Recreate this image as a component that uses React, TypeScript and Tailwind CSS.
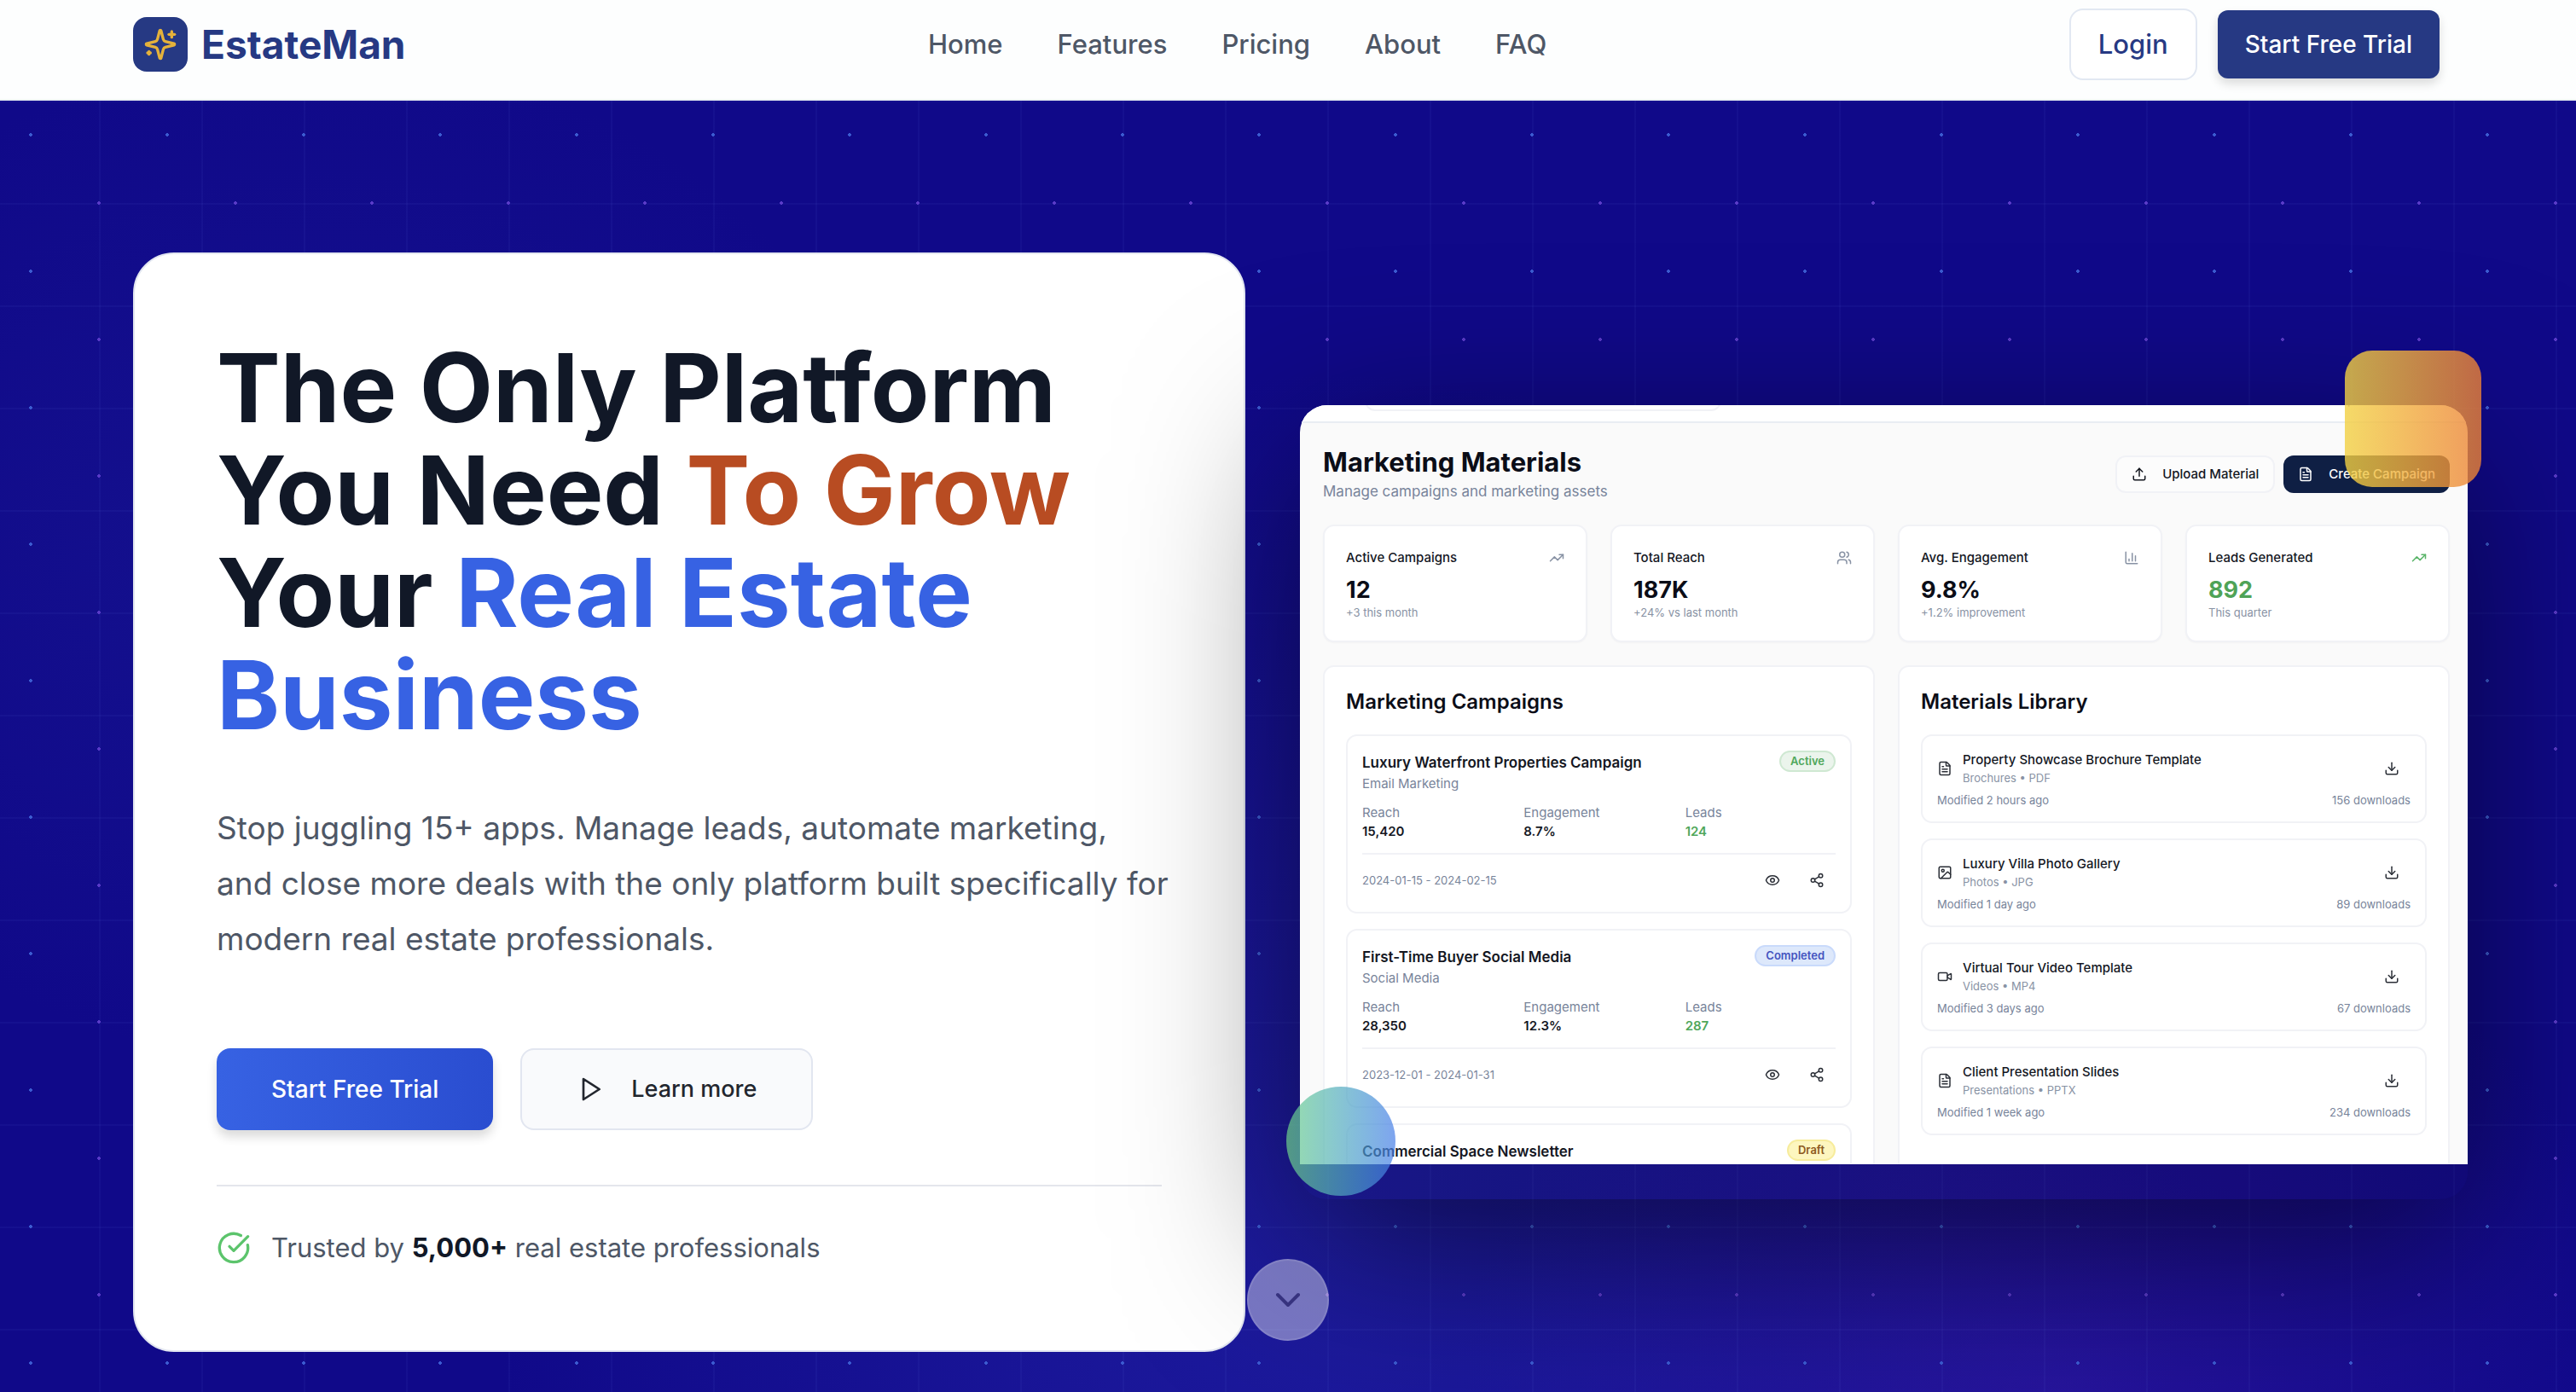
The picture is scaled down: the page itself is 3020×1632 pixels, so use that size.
import React from "react";
import {
  ChartColumn, ChevronDown, CircleCheckBig, Download, Eye, FileText, Image as ImageIcon,
  Share2, TrendingUp, Upload, Users, Video,
} from "lucide-react";

const navLinks = ["Home", "Features", "Pricing", "About", "FAQ"];

const stats = [
  { label: "Active Campaigns", value: "12", note: "+3 this month", Icon: TrendingUp, green: false },
  { label: "Total Reach", value: "187K", note: "+24% vs last month", Icon: Users, green: false },
  { label: "Avg. Engagement", value: "9.8%", note: "+1.2% improvement", Icon: ChartColumn, green: false },
  { label: "Leads Generated", value: "892", note: "This quarter", Icon: TrendingUp, green: true },
];

const campaigns = [
  {
    name: "Luxury Waterfront Properties Campaign", kind: "Email Marketing", status: "Active",
    badge: "border-[#cfe8d2] bg-[#ebf4ec] text-[#4fa75a]",
    reach: "15,420", engagement: "8.7%", leads: "124", dates: "2024-01-15 - 2024-02-15",
  },
  {
    name: "First-Time Buyer Social Media", kind: "Social Media", status: "Completed",
    badge: "border-[#c9dafb] bg-[#dde8fb] text-[#4453bf]",
    reach: "28,350", engagement: "12.3%", leads: "287", dates: "2023-12-01 - 2024-01-31",
  },
];

const materials = [
  { name: "Property Showcase Brochure Template", kind: "Brochures • PDF", when: "Modified 2 hours ago", count: "156 downloads", Icon: FileText },
  { name: "Luxury Villa Photo Gallery", kind: "Photos • JPG", when: "Modified 1 day ago", count: "89 downloads", Icon: ImageIcon },
  { name: "Virtual Tour Video Template", kind: "Videos • MP4", when: "Modified 3 days ago", count: "67 downloads", Icon: Video },
  { name: "Client Presentation Slides", kind: "Presentations • PPTX", when: "Modified 1 week ago", count: "234 downloads", Icon: FileText },
];

function SparkleLogo() {
  return (
    <svg viewBox="0 0 24 24" className="size-10 text-[#e5b23b]" fill="none" stroke="currentColor" strokeWidth="2" strokeLinecap="round" strokeLinejoin="round">
      <path d="M9.937 15.5A2 2 0 0 0 8.5 14.063l-6.135-1.582a.5.5 0 0 1 0-.962L8.5 9.936A2 2 0 0 0 9.937 8.5l1.582-6.135a.5.5 0 0 1 .963 0L14.063 8.5A2 2 0 0 0 15.5 9.937l6.135 1.581a.5.5 0 0 1 0 .964L15.5 14.063a2 2 0 0 0-1.437 1.437l-1.582 6.135a.5.5 0 0 1-.963 0z" />
      <path d="M20 3v4" />
      <path d="M22 5h-4" />
      <path d="M4 17v2" />
      <path d="M5 18H3" />
    </svg>
  );
}

function Header() {
  return (
    <header className="relative z-20 flex h-[118px] items-start justify-between border-b-2 border-[#eef3f4] bg-[#fdfefe] pt-2.5 pr-[160px] pl-[156px]">
      <a href="#" className="flex h-[84px] items-center gap-4">
        <span className="flex size-16 items-center justify-center rounded-2xl bg-[#263983]">
          <SparkleLogo />
        </span>
        <span className="text-[46px] leading-[56px] font-bold text-[#263983]">EstateMan</span>
      </a>
      <nav className="flex h-[84px] items-center gap-16">
        {navLinks.map((l) => (
          <a key={l} href="#" className="text-[31px] leading-[48px] font-medium text-[#4e5766]">{l}</a>
        ))}
      </nav>
      <div className="flex h-[84px] items-center gap-6">
        <button className="h-[84px] rounded-2xl border-2 border-[#e2e8f2] bg-white px-8 text-[31px] leading-[48px] font-medium text-[#263983]">Login</button>
        <button className="h-20 rounded-xl bg-[#263983] px-8 text-[28px] leading-[40px] font-medium text-white shadow-[0_6px_12px_rgba(0,0,0,0.14)]">Start Free Trial</button>
      </div>
    </header>
  );
}

function Pitch() {
  return (
    <div className="min-w-0 rounded-[48px] border-2 border-[#e2e6f0] bg-white p-24">
      <h1 className="text-[112px] leading-[120px] font-bold text-[#111827]">
        The Only Platform<br />You Need <span className="text-[#b84c22]">To Grow</span><br />Your{" "}
        <span className="text-[#3762e3]">Real Estate<br />Business</span>
      </h1>
      <p className="mt-16 text-[37px] leading-[65px] whitespace-nowrap text-[#4e5766]">
        Stop juggling 15+ apps. Manage leads, automate marketing,<br />and close more deals with the only platform built specifically for<br />modern real estate professionals.
      </p>
      <div className="mt-24 flex gap-8">
        <button className="h-24 rounded-2xl bg-linear-to-r from-[#3762e3] to-[#2a4dd0] px-16 text-[28px] leading-[40px] font-medium text-white shadow-[0_8px_12px_rgba(0,0,0,0.14)]">Start Free Trial</button>
        <button className="flex h-24 items-center gap-8 rounded-2xl border-2 border-[#e2e6f0] bg-[#f9fafc] px-16 text-[27px] leading-[40px] font-medium text-[#22262e]">
          <svg viewBox="0 0 24 24" className="size-8" fill="none" stroke="currentColor" strokeWidth="2" strokeLinecap="round" strokeLinejoin="round">
            <polygon points="6 3 20 12 6 21 6 3" />
          </svg>
          Learn more
        </button>
      </div>
      <div className="mt-16 flex items-center gap-6 border-t-2 border-[#e4e6ec] pt-12 text-[31px] leading-[48px] text-[#4e5766]">
        <CircleCheckBig className="size-10 text-[#5cc46c]" strokeWidth={2} />
        <p>Trusted by <strong className="font-bold text-[#111827]">5,000+</strong> real estate professionals</p>
      </div>
    </div>
  );
}

function CardHead({ name, kind, status, badge }: { name: string; kind?: string; status: string; badge: string }) {
  return (
    <div className="flex items-start justify-between">
      <div>
        <h4 className="text-[17px] leading-[28px] font-semibold text-[#14171f]">{name}</h4>
        {kind && <p className="text-[15px] leading-[22px] text-[#78849a]">{kind}</p>}
      </div>
      <span className={"rounded-full border-2 px-[11px] text-[13px] leading-[21px] font-semibold " + badge}>{status}</span>
    </div>
  );
}

function CampaignCard({ c }: { c: (typeof campaigns)[number] }) {
  return (
    <article className="rounded-[13px] border-2 border-[#f1f2f6] p-[17px]">
      <CardHead name={c.name} kind={c.kind} status={c.status} badge={c.badge} />
      <dl className="mt-3 grid grid-cols-3 gap-x-[13px] text-[15px] leading-[22px]">
        <div><dt className="text-[#78849a]">Reach</dt><dd className="font-semibold text-[#14171f]">{c.reach}</dd></div>
        <div><dt className="text-[#78849a]">Engagement</dt><dd className="font-semibold text-[#14171f]">{c.engagement}</dd></div>
        <div><dt className="text-[#78849a]">Leads</dt><dd className="font-semibold text-[#4fa75a]">{c.leads}</dd></div>
      </dl>
      <div className="mt-3.5 flex items-center justify-between border-t-2 border-[#f1f2f6] pt-2.5">
        <time className="text-[13px] leading-[20px] text-[#78849a]">{c.dates}</time>
        <div className="flex gap-4 pr-1 text-[#2b2f37]">
          <button aria-label="View campaign" className="flex h-10 w-9 items-center justify-center"><Eye className="size-[18px]" /></button>
          <button aria-label="Share campaign" className="flex h-10 w-9 items-center justify-center"><Share2 className="size-[18px]" /></button>
        </div>
      </div>
    </article>
  );
}

function MaterialCard({ m }: { m: (typeof materials)[number] }) {
  return (
    <article className="h-[104px] rounded-[13px] border-2 border-[#f1f2f6] p-[17px]">
      <div className="flex items-center">
        <m.Icon className="size-[18px] text-[#2b2f37]" />
        <div className="ml-3 flex-1">
          <h4 className="text-[15px] leading-[22px] font-medium text-[#14171f]">{m.name}</h4>
          <p className="text-[13px] leading-[20px] text-[#8892a4]">{m.kind}</p>
        </div>
        <button aria-label={"Download " + m.name} className="flex w-11 items-center justify-center text-[#2b2f37]"><Download className="size-[18px]" /></button>
      </div>
      <div className="mt-1.5 flex justify-between text-[13px] leading-[20px] text-[#78849a]">
        <span>{m.when}</span><span>{m.count}</span>
      </div>
    </article>
  );
}

function Preview() {
  return (
    <div className="relative min-w-0 rounded-[32px] bg-black/15 pb-[41px] shadow-[0_50px_200px_0_rgba(0,0,0,0.52)]">
      <div className="flex h-[890px] flex-col overflow-hidden rounded-t-[32px] bg-[#fafafa]">
        <div className="flex h-[21px] shrink-0 items-end justify-between border-b-2 border-[#e9edf3] bg-white pr-[73px] pl-[76px]">
          <div className="mb-3 h-11 w-[418px] rounded-[12px] border-2 border-[#f1f2f6]" />
          <span className="mb-[15px] text-[14px] leading-[20px] text-[#78849a]">Super Admin</span>
        </div>
        <div className="flex flex-1 flex-col gap-[27px] pt-7 pr-[21px] pl-[27px]">
          <div className="flex items-start justify-between">
            <div>
              <h2 className="text-[31px] leading-[36px] font-bold text-[#0b0d17]">Marketing Materials</h2>
              <p className="pt-1 text-[17px] leading-[24px] text-[#78849a]">Manage campaigns and marketing assets</p>
            </div>
            <div className="flex gap-2.5 pt-2.5 text-[15px] leading-[20px] font-medium">
              <button className="flex h-11 items-center gap-[18px] rounded-[12px] border-2 border-[#f1f2f6] bg-[#fcfcfc] px-[17px] text-[#14171f]"><Upload className="size-[18px]" />Upload Material</button>
              <button className="flex h-11 items-center gap-[18px] rounded-[12px] bg-[#0f1f44] px-[17px] text-white"><FileText className="size-[18px]" />Create Campaign</button>
            </div>
          </div>
          <div className="grid grid-cols-4 gap-[27px]">
            {stats.map((s) => (
              <section key={s.label} className="h-[138px] rounded-[13px] border-2 border-[#f1f2f6] bg-white px-[25px] pt-[26px] shadow-[0_1px_2px_rgba(0,0,0,0.03)]">
                <div className="flex items-center justify-between">
                  <h3 className="text-[15px] leading-[22px] font-medium text-[#14171f]">{s.label}</h3>
                  <s.Icon className={s.green ? "size-[18px] text-[#5bb56a]" : "size-[18px] text-[#8892a4]"} />
                </div>
                <p className={s.green ? "mt-2.5 text-[27px] leading-[34px] font-bold text-[#4fa357]" : "mt-2.5 text-[27px] leading-[34px] font-bold text-[#0b0d17]"}>{s.value}</p>
                <p className="text-[13px] leading-[18px] text-[#8892a4]">{s.note}</p>
              </section>
            ))}
          </div>
          <div className="grid flex-1 grid-cols-2 gap-[27px]">
            <section className="rounded-t-[13px] border-2 border-b-0 border-[#f1f2f6] bg-white px-[25px] pt-6">
              <h3 className="mb-[21px] text-[24px] leading-[34px] font-semibold text-[#0b0d17]">Marketing Campaigns</h3>
              <div className="flex flex-col gap-[18px]">
                {campaigns.map((c) => <CampaignCard key={c.name} c={c} />)}
                <article className="rounded-t-[13px] border-2 border-b-0 border-[#f1f2f6] px-[17px] pt-[17px]">
                  <CardHead name="Commercial Space Newsletter" status="Draft" badge="border-[#f7ec9c] bg-[#fdf6bf] text-[#8d5a20]" />
                </article>
              </div>
            </section>
            <section className="rounded-t-[13px] border-2 border-b-0 border-[#f1f2f6] bg-white px-[25px] pt-6">
              <h3 className="mb-[21px] text-[24px] leading-[34px] font-semibold text-[#0b0d17]">Materials Library</h3>
              <div className="flex flex-col gap-[18px]">{materials.map((m) => <MaterialCard key={m.name} m={m} />)}</div>
            </section>
          </div>
        </div>
      </div>
      <div className="absolute -top-16 -right-4 size-40 rounded-[32px] bg-linear-to-r from-[#f2d142] to-[#ec8136] opacity-80" />
      <div className="absolute bottom-1 -left-4 size-32 rounded-full bg-linear-to-r from-[#6ed288] to-[#477de8] opacity-70" />
    </div>
  );
}

export default function App() {
  return (
    <div className="relative min-h-screen overflow-hidden bg-[#100989] font-[Inter,sans-serif]">
      <div className="absolute inset-0 bg-[radial-gradient(ellipse_700px_600px_at_12%_40%,rgba(45,60,170,0.16),transparent),radial-gradient(ellipse_700px_600px_at_80%_100%,rgba(70,35,180,0.38),transparent),radial-gradient(ellipse_1000px_1000px_at_52%_88%,rgba(50,55,190,0.42),transparent)]" />
      <div className="absolute inset-0 bg-[repeating-linear-gradient(90deg,transparent_0_116px,rgba(120,150,255,0.05)_116px_118px,transparent_118px_120px),repeating-linear-gradient(180deg,transparent_0_118px,rgba(120,150,255,0.05)_118px_120px)]" />
      <div className="absolute inset-0 bg-[radial-gradient(circle,#3b5bd0_2px,transparent_2px)] bg-size-[160px_160px] bg-position-[-44px_78px]" />
      <div className="absolute inset-0 bg-[radial-gradient(circle,#5a3bc8_2px,transparent_2px)] bg-size-[160px_160px] bg-position-[36px_-2px]" />
      <Header />
      <main className="relative grid grid-cols-[minmax(0,1304fr)_minmax(0,1369fr)] items-center gap-16 pt-[178px] pr-[127px] pb-[46px] pl-[156px]">
        <Pitch />
        <Preview />
      </main>
      <button aria-label="Scroll down" className="absolute bottom-[60px] left-1/2 flex size-24 -translate-x-1/2 items-center justify-center rounded-full border-2 border-white/10 bg-white/40 text-[#37337f]">
        <ChevronDown className="size-12" />
      </button>
    </div>
  );
}
